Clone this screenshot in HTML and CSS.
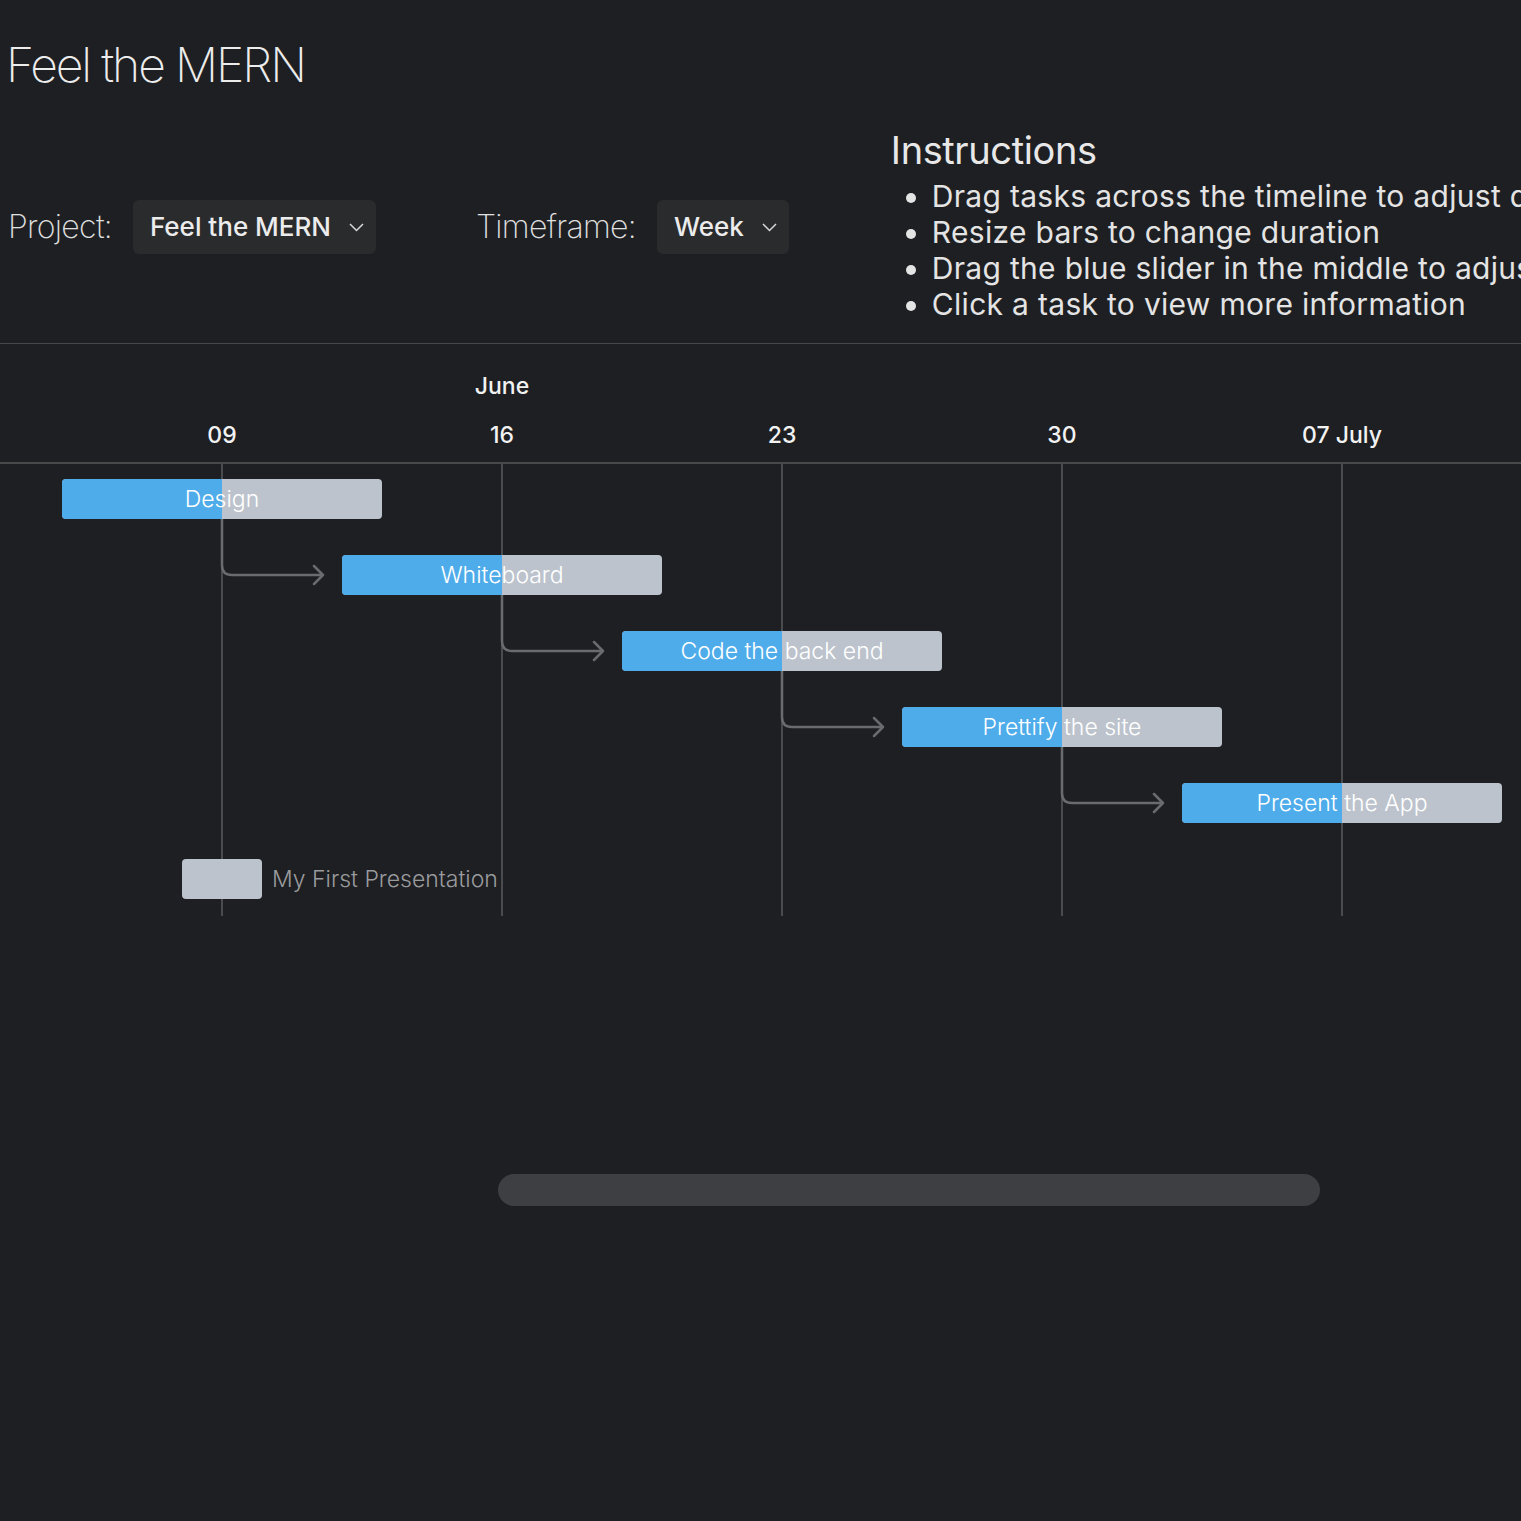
FILE: index.html
```html
<!DOCTYPE html>
<html>
<head>
<meta charset="utf-8">
<link rel="stylesheet" href="styles.css">
</head>
<body>
<header class="top">
  <h1 class="title">Feel the MERN</h1>
  <div class="toolbar">
    <div class="field">
      <span class="label">Project:</span>
      <div class="select">
        <span>Feel the MERN</span>
        <svg class="chev" width="15" height="9" viewBox="0 0 15 9"><path d="M1 1 L7.5 7.5 L14 1" fill="none" stroke="#d8d8d8" stroke-width="1.5"/></svg>
      </div>
    </div>
    <div class="field">
      <span class="label">Timeframe:</span>
      <div class="select">
        <span>Week</span>
        <svg class="chev" width="15" height="9" viewBox="0 0 15 9"><path d="M1 1 L7.5 7.5 L14 1" fill="none" stroke="#d8d8d8" stroke-width="1.5"/></svg>
      </div>
    </div>
    <div class="instructions">
      <h2>Instructions</h2>
      <ul>
        <li>Drag tasks across the timeline to adjust dates</li>
        <li>Resize bars to change duration</li>
        <li>Drag the blue slider in the middle to adjust progress</li>
        <li>Click a task to view more information</li>
      </ul>
    </div>
  </div>
</header>

<section class="gantt">
  <div class="gantt-header">
    <div class="months">
      <span class="month" style="left:502px">June</span>
    </div>
    <div class="dates">
      <span class="date" style="left:222px">09</span>
      <span class="date" style="left:502px">16</span>
      <span class="date" style="left:782px">23</span>
      <span class="date" style="left:1062px">30</span>
      <span class="date" style="left:1342px">07 July</span>
    </div>
  </div>
  <div class="gantt-body">
    <div class="vline" style="left:221px"></div>
    <div class="vline" style="left:501px"></div>
    <div class="vline" style="left:781px"></div>
    <div class="vline" style="left:1061px"></div>
    <div class="vline" style="left:1341px"></div>

    <svg class="arrows" width="1521" height="452" viewBox="0 464 1521 452">
      <g fill="none" stroke="#6a6b6e" stroke-width="2.5" stroke-linecap="round" stroke-linejoin="round">
        <path d="M222 519 V565 Q222 575 232 575 H323 M314 566 L323 575 L314 584"/>
        <path d="M502 595 V641 Q502 651 512 651 H603 M594 642 L603 651 L594 660"/>
        <path d="M782 671 V717 Q782 727 792 727 H883 M874 718 L883 727 L874 736"/>
        <path d="M1062 747 V793 Q1062 803 1072 803 H1163 M1154 794 L1163 803 L1154 812"/>
      </g>
    </svg>

    <div class="row">
      <div class="bar" style="left:62px;width:320px"><div class="progress" style="width:160px"></div><span class="bar-label">Design</span></div>
    </div>
    <div class="row">
      <div class="bar" style="left:342px;width:320px"><div class="progress" style="width:160px"></div><span class="bar-label">Whiteboard</span></div>
    </div>
    <div class="row">
      <div class="bar" style="left:622px;width:320px"><div class="progress" style="width:160px"></div><span class="bar-label">Code the back end</span></div>
    </div>
    <div class="row">
      <div class="bar" style="left:902px;width:320px"><div class="progress" style="width:160px"></div><span class="bar-label">Prettify the site</span></div>
    </div>
    <div class="row">
      <div class="bar" style="left:1182px;width:320px"><div class="progress" style="width:160px"></div><span class="bar-label">Present the App</span></div>
    </div>
    <div class="row">
      <div class="bar small" style="left:182px;width:80px"></div>
      <span class="outside-label" style="left:272px">My First Presentation</span>
    </div>
  </div>
  <div class="scroll-track">
    <div class="scroll-thumb"></div>
  </div>
</section>
</body>
</html>
```

FILE: styles.css
```css
html, body {
  margin: 0;
  padding: 0;
  background: #1e1f22;
  overflow: hidden;
}
body {
  font-family: Inter, "Noto Sans", sans-serif;
  color: #e6e6e6;
  width: 1521px;
  height: 1521px;
}
.top {
  padding: 0 0 0 8px;
  border-bottom: 1px solid #464749;
  height: 344px;
  box-sizing: border-box;
  white-space: nowrap;
}
.title {
  margin: 0;
  padding-top: 36px;
  font-size: 48px;
  line-height: 58px;
  font-weight: 200;
  color: #ececec;
  letter-spacing: -2.1px;
  margin-left: -2px;
}
.toolbar {
  display: flex;
  align-items: center;
  margin-top: 37px;
}
.field {
  display: flex;
  align-items: center;
  gap: 21px;
  margin-right: 100px;
}
.label {
  font-size: 32px;
  font-weight: 200;
  color: #e0e0e0;
  letter-spacing: -0.7px;
}
.select {
  display: flex;
  align-items: center;
  height: 54px;
  padding: 0 12px 0 17px;
  gap: 18px;
  background: #2a2b2d;
  border-radius: 6px;
  font-size: 26px;
  font-weight: 500;
  color: #ececec;
  box-sizing: border-box;
}
.chev { display: block; margin-top: 2px; }
.instructions {
  margin-left: 2px;
}
.instructions h2 {
  margin: -3px 0 0 0;
  font-size: 38px;
  line-height: 44px;
  font-weight: 400;
  color: #e8e8e8;
  letter-spacing: -0.4px;
}
.instructions ul {
  margin: 6px 0 0 0;
  padding-left: 41px;
  font-size: 30px;
  line-height: 36px;
  font-weight: 400;
  color: #e4e4e4;
  letter-spacing: 0.3px;
}
.gantt {
  position: relative;
}
.gantt-header {
  position: relative;
  height: 118px;
  border-bottom: 2px solid #48494b;
}
.months, .dates {
  position: relative;
}
.months { height: 60px; }
.dates { height: 50px; }
.month, .date {
  position: absolute;
  transform: translateX(-50%);
  font-size: 23px;
  font-weight: 500;
  color: #f2f2f2;
  white-space: nowrap;
}
.month { top: 28px; }
.date { top: 17px; }
.gantt-body {
  position: relative;
  height: 452px;
}
.vline {
  position: absolute;
  top: 0;
  bottom: 0;
  width: 2px;
  background: #4a4b4e;
}
.arrows {
  position: absolute;
  left: 0;
  top: 0;
}
.row {
  position: relative;
  height: 76px;
}
.bar {
  position: absolute;
  top: 15px;
  height: 40px;
  background: #bcc3cc;
  border-radius: 4px;
  overflow: hidden;
}
.progress {
  position: absolute;
  left: 0;
  top: 0;
  bottom: 0;
  background: #4eacea;
}
.bar-label {
  position: absolute;
  left: 0;
  right: 0;
  top: 0;
  line-height: 40px;
  text-align: center;
  font-size: 23px;
  font-weight: 300;
  color: #ffffff;
  white-space: nowrap;
}
.outside-label {
  position: absolute;
  top: 15px;
  line-height: 40px;
  font-size: 23px;
  font-weight: 300;
  color: #9a9b9e;
  white-space: nowrap;
}
.scroll-track {
  padding: 258px 0 0 498px;
}
.scroll-thumb {
  width: 822px;
  height: 32px;
  border-radius: 16px;
  background: #3e3f43;
}
```
